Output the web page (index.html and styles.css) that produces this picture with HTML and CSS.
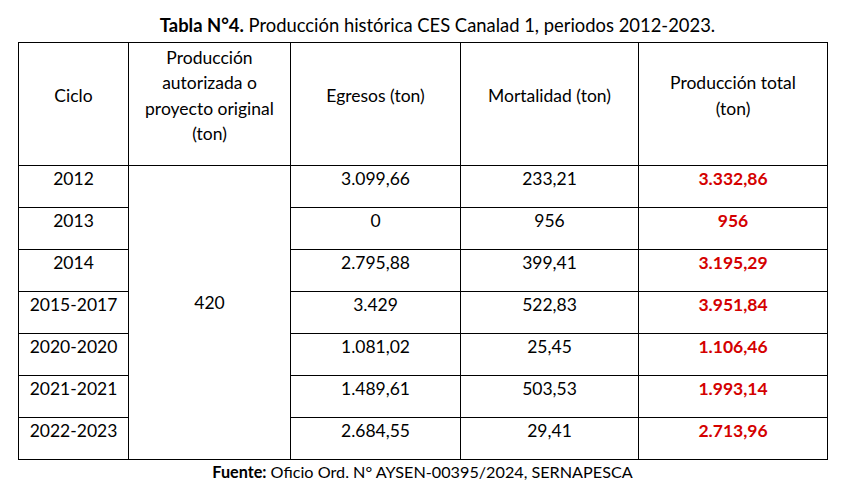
FILE: index.html
```html
<!DOCTYPE html>
<html lang="es">
<head>
<meta charset="utf-8">
<title>Tabla N°4</title>
<link rel="stylesheet" href="styles.css">
</head>
<body>
<div class="page">
  <p class="caption"><b>Tabla N°4.</b> Producción histórica CES Canalad 1, periodos 2012-2023.</p>
  <table class="prod">
    <colgroup>
      <col class="c1"><col class="c2"><col class="c3"><col class="c4"><col class="c5">
    </colgroup>
    <thead>
      <tr>
        <th>Ciclo</th>
        <th>Producción autorizada o proyecto original (ton)</th>
        <th>Egresos (ton)</th>
        <th>Mortalidad (ton)</th>
        <th>Producción total<br>(ton)</th>
      </tr>
    </thead>
    <tbody>
      <tr><td>2012</td><td class="merged" rowspan="7">420</td><td>3.099,66</td><td>233,21</td><td class="total">3.332,86</td></tr>
      <tr><td>2013</td><td>0</td><td>956</td><td class="total">956</td></tr>
      <tr><td>2014</td><td>2.795,88</td><td>399,41</td><td class="total">3.195,29</td></tr>
      <tr><td>2015-2017</td><td>3.429</td><td>522,83</td><td class="total">3.951,84</td></tr>
      <tr><td>2020-2020</td><td>1.081,02</td><td>25,45</td><td class="total">1.106,46</td></tr>
      <tr><td>2021-2021</td><td>1.489,61</td><td>503,53</td><td class="total">1.993,14</td></tr>
      <tr><td>2022-2023</td><td>2.684,55</td><td>29,41</td><td class="total">2.713,96</td></tr>
    </tbody>
  </table>
  <p class="source"><b>Fuente:</b> Oficio Ord. N° AYSEN-00395/2024, SERNAPESCA</p>
</div>
</body>
</html>
```
FILE: styles.css
```css
html, body {
  margin: 0;
  padding: 0;
  background: #ffffff;
}
body {
  font-family: Lato, "Liberation Sans", sans-serif;
  color: #000000;
}
.page {
  width: 809px;
  margin-left: 18px;
  padding-top: 13px;
}
.caption {
  margin: 0 0 5px 0;
  padding-left: 30px;
  text-align: center;
  font-size: 18.4px;
  line-height: 24px;
}
.prod {
  width: 809px;
  border-collapse: collapse;
  table-layout: fixed;
  font-size: 17.5px;
}
.c1 { width: 110px; }
.c2 { width: 162px; }
.c3 { width: 170px; }
.c4 { width: 178px; }
.c5 { width: 189px; }
.prod th,
.prod td {
  border: 1px solid #000000;
  text-align: center;
  padding: 0 4px;
}
.prod th {
  font-weight: normal;
  height: 105px;
  line-height: 25.5px;
  vertical-align: middle;
  padding-bottom: 17px;
}
.prod td {
  height: 42px;
  line-height: 24px;
  vertical-align: top;
  padding-top: 1px;
  box-sizing: border-box;
}
.prod td.merged {
  vertical-align: middle;
  padding-top: 0;
  padding-bottom: 20px;
}
.prod td.total {
  color: #d40000;
  font-weight: bold;
}
.source {
  margin: 3px 0 0 0;
  text-align: center;
  font-size: 16.2px;
  line-height: 18px;
}
```
